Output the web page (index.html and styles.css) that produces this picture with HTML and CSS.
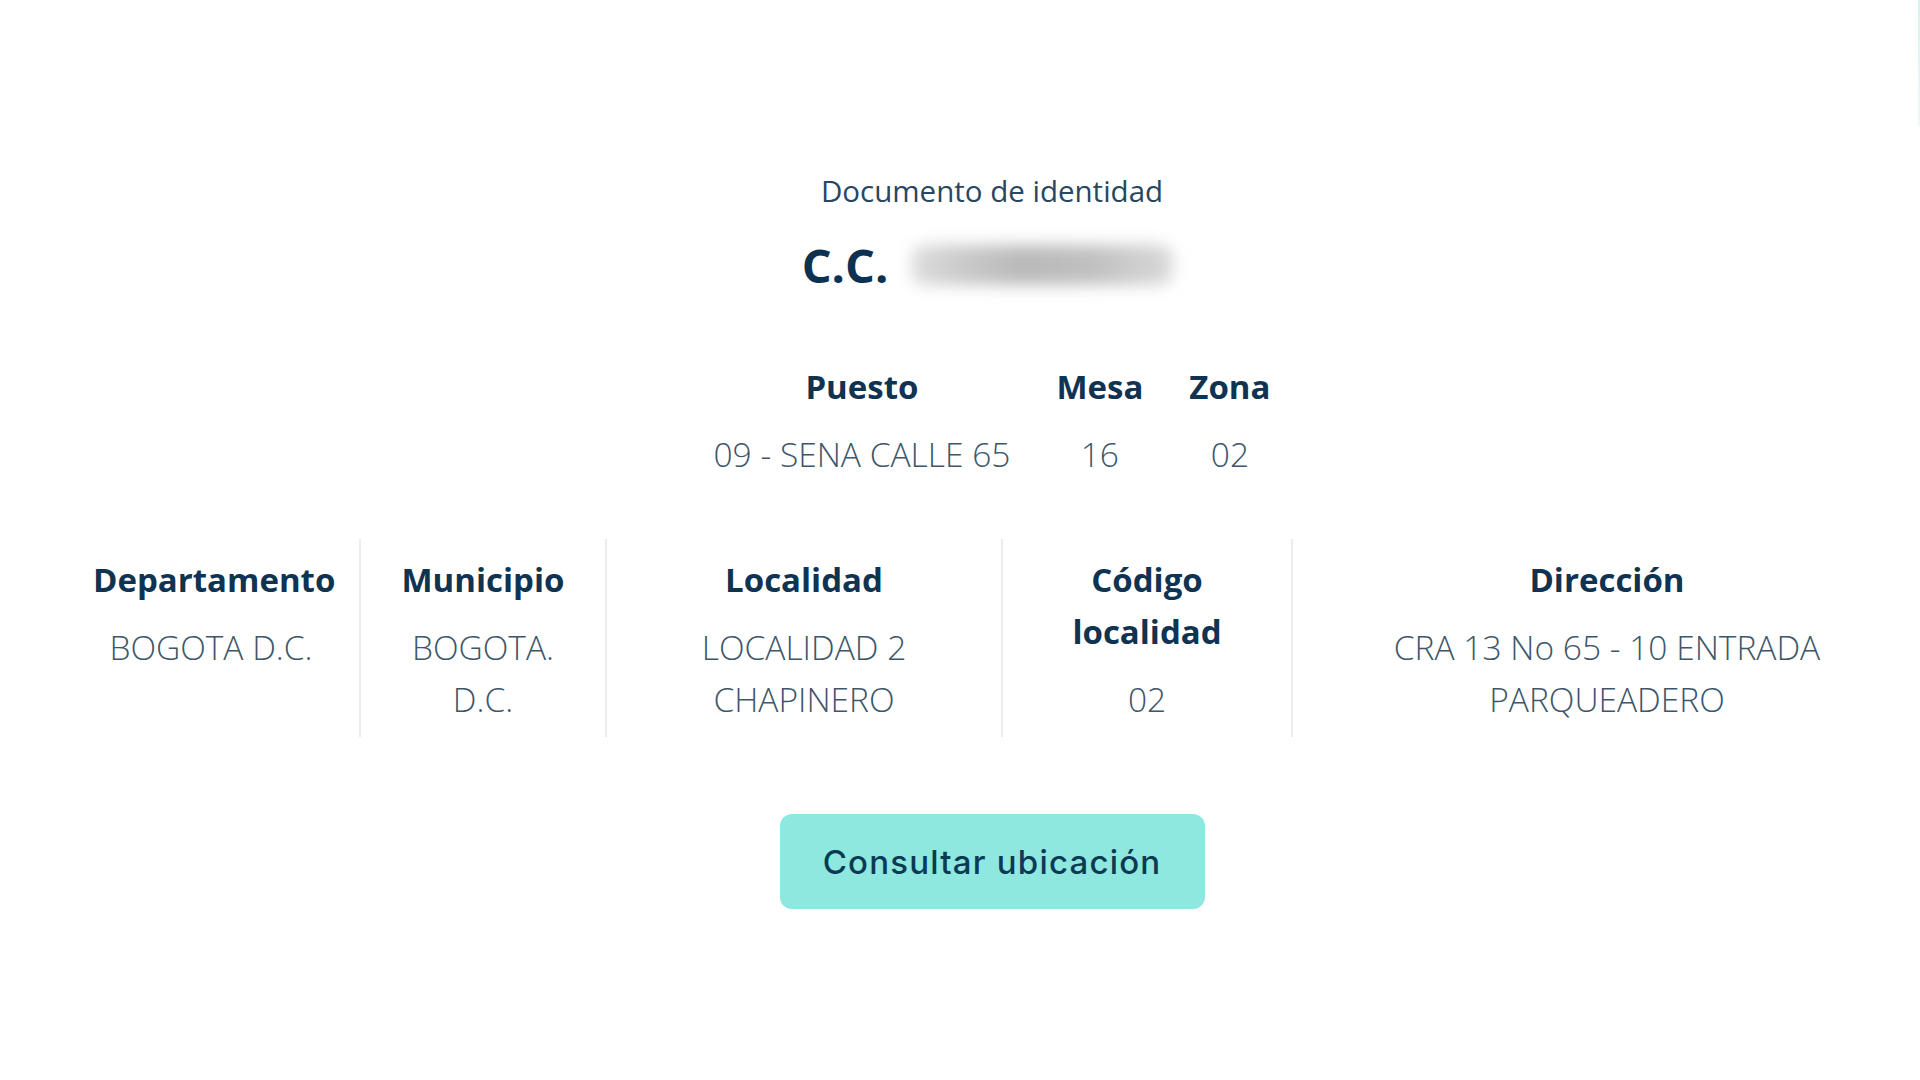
FILE: index.html
```html
<!DOCTYPE html>
<html lang="es">
<head>
<meta charset="utf-8">
<title>Consulta de puesto de votación</title>
<link rel="stylesheet" href="styles.css">
</head>
<body>
<div class="edge"></div>
<main class="page">
  <p class="doc-label">Documento de identidad</p>
  <div class="doc-row">
    <span class="doc-type">C.C.</span>
    <span class="doc-blur"><span class="doc-blur-core"></span></span>
  </div>

  <div class="puesto">
    <div class="cell">
      <div class="head">Puesto</div>
      <div class="val">09 - SENA CALLE 65</div>
    </div>
    <div class="cell">
      <div class="head">Mesa</div>
      <div class="val">16</div>
    </div>
    <div class="cell">
      <div class="head">Zona</div>
      <div class="val">02</div>
    </div>
  </div>

  <div class="info">
    <div class="col">
      <div class="head">Departamento</div>
      <div class="val">BOGOTA D.C.</div>
    </div>
    <div class="col">
      <div class="head">Municipio</div>
      <div class="val">BOGOTA. D.C.</div>
    </div>
    <div class="col">
      <div class="head">Localidad</div>
      <div class="val">LOCALIDAD 2 CHAPINERO</div>
    </div>
    <div class="col">
      <div class="head">Código localidad</div>
      <div class="val">02</div>
    </div>
    <div class="col">
      <div class="head">Dirección</div>
      <div class="val">CRA 13 No 65 - 10 ENTRADA PARQUEADERO</div>
    </div>
  </div>

  <div class="actions">
    <button class="btn" type="button">Consultar ubicación</button>
  </div>
</main>
</body>
</html>
```
FILE: styles.css
```css
* { box-sizing: border-box; }

html, body {
  margin: 0;
  padding: 0;
  background: #ffffff;
  overflow: hidden;
}

body {
  font-family: "Open Sans", "Noto Sans", sans-serif;
  color: #0f3350;
  width: 1920px;
  height: 1080px;
}

.edge {
  position: fixed;
  top: 0;
  right: 0;
  width: 2px;
  height: 126px;
  background: linear-gradient(#d8f1ee, #eef9f8);
}

.page {
  margin-left: 63px;
  width: 1858px;
  padding-top: 171px;
  display: flex;
  flex-direction: column;
  align-items: center;
}

.doc-label {
  margin: 0;
  font-size: 29.5px;
  line-height: 40px;
  font-weight: 400;
  color: #284760;
}

.doc-row {
  margin-top: 28px;
  height: 52px;
  display: flex;
  align-items: center;
  gap: 14px;
}

.doc-type {
  font-size: 47px;
  font-weight: 700;
  line-height: 52px;
  color: #0d3150;
}

.doc-blur {
  width: 280px;
  height: 56px;
  display: flex;
  align-items: center;
  justify-content: center;
}

.doc-blur-core {
  display: block;
  width: 262px;
  height: 40px;
  border-radius: 14px;
  background: linear-gradient(90deg, #dedede 0%, #cbcbcb 18%, #b9b9b9 42%, #bfbfbf 68%, #d9d9d9 100%);
  filter: blur(8px);
}

.head {
  font-size: 33px;
  line-height: 52px;
  font-weight: 700;
  color: #0f3350;
}

.val {
  margin-top: 15px;
  font-size: 33.5px;
  line-height: 52px;
  font-weight: 300;
  color: #3d566a;
}

.puesto {
  margin-top: 70px;
  display: flex;
}

.puesto .cell {
  padding: 0 23px;
  text-align: center;
  white-space: nowrap;
}

.info {
  margin-top: 59px;
  width: 100%;
  display: grid;
  grid-template-columns: 296px 246px 396px 290px 1fr;
}

.info .col {
  padding: 15px 30px 12px;
  text-align: center;
}

.info .col + .col {
  border-left: 2px solid #ececec;
}

.actions {
  margin-top: 77px;
}

.btn {
  width: 425px;
  height: 95px;
  border: none;
  border-radius: 12px;
  background: #8ee8df;
  color: #0b3a55;
  font-family: "Inter", "Open Sans", sans-serif;
  font-size: 33px;
  font-weight: 500;
  letter-spacing: 1.2px;
  cursor: pointer;
}
```
